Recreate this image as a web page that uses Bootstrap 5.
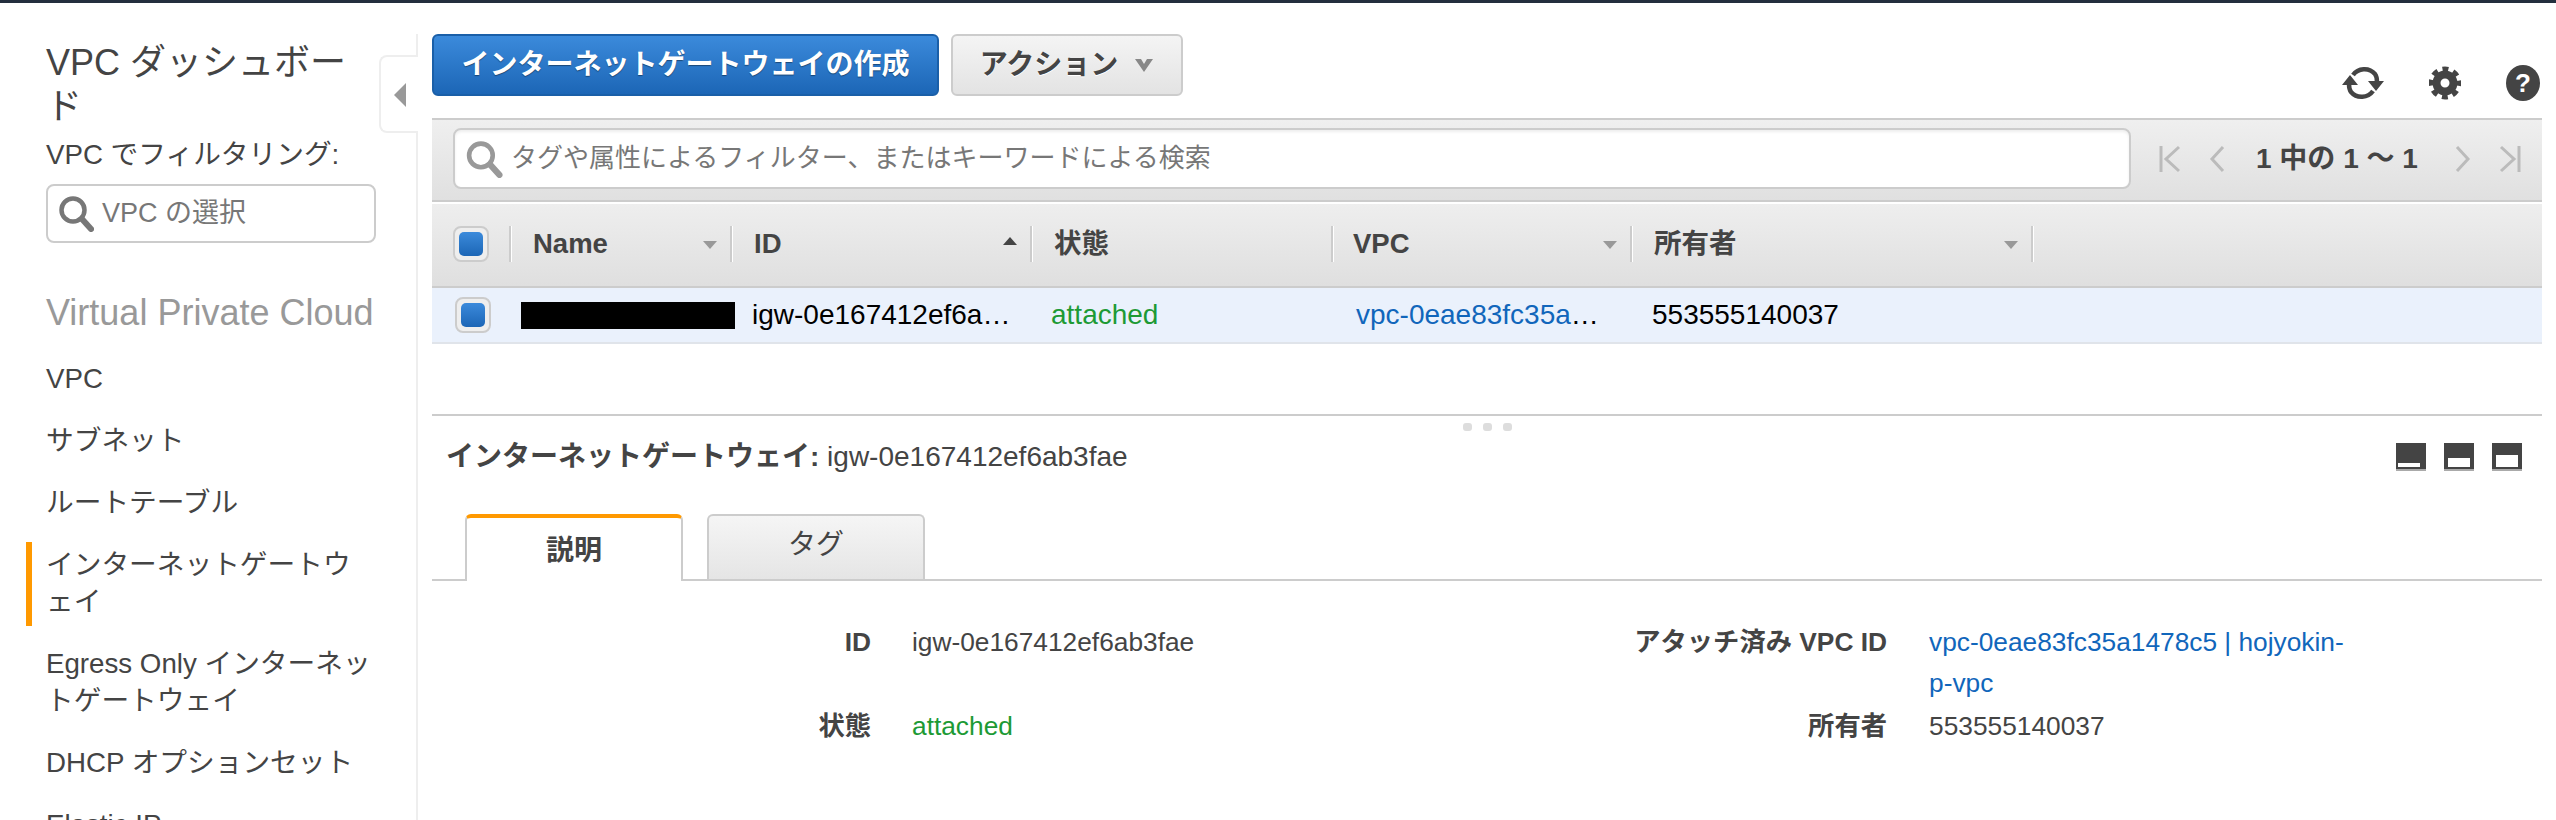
<!DOCTYPE html>
<html lang="ja">
<head>
  <meta charset="UTF-8" />
  <meta name="viewport" content="width=device-width, initial-scale=1.0" />
  <title>インターネットゲートウェイ</title>
  <link href="https://cdn.jsdelivr.net/npm/bootstrap@5.3.0/dist/css/bootstrap.min.css" rel="stylesheet" />
  <style>
    html, body { height: 820px; overflow: hidden; }
    body {
      font-family: "Liberation Sans", "Noto Sans CJK JP", sans-serif;
      font-size: 26px;
      color: #444;
      background: #fff;
    }
    a { text-decoration: none; color: #1166bb; }

    .top-strip { height: 3px; background: #232f3e; }
    .shell { margin-top: 31px; height: 786px; }

    /* sidebar */
    .side-col { width: 418px; flex: none; border-right: 2px solid #eee; padding: 7px 0 0 46px; position: relative; }
    .side-title { font-size: 36px; line-height: 44px; font-weight: 400; margin: 0; color: #444; }
    .side-label { font-size: 27.7px; line-height: 32px; margin-top: 10px; white-space: nowrap; }
    .vpc-select { width: 330px; height: 59px; margin-top: 13px; border: 2px solid #ccc; border-radius: 8px; padding-left: 10px; color: #777; font-size: 27px; }
    .side-head { font-size: 36px; line-height: 44px; color: #999; margin-top: 48px; white-space: nowrap; }
    .side-nav { margin-top: 25px; font-size: 27.7px; }
    .side-nav a { display: block; color: #444; line-height: 37px; position: relative; white-space: nowrap; }
    .side-nav a + a { margin-top: 25px; }
    .side-nav a.on::before { content: ""; position: absolute; left: -20px; top: -4px; width: 6px; height: 84px; background: #f90; }
    .collapse-tab { position: absolute; left: 379px; top: 21px; width: 39px; height: 78px; background: #fff; border: 2px solid #eee; border-right: 0; border-radius: 8px 0 0 8px; }
    .collapse-tab i { position: absolute; left: 13px; top: 26px; border-style: solid; border-width: 12px 12px 12px 0; border-color: transparent #999 transparent transparent; }

    /* main */
    .main-col { flex: 1; margin: 0 14px; min-width: 0; }
    .tool-row { height: 84px; }
    .btn-create, .btn-action { height: 62px; font-size: 28px; font-weight: 700; border-radius: 6px; padding: 0; line-height: 1; }
    .btn-create { width: 507px; color: #fff; background: linear-gradient(#3b8adb, #1c66b6); border: 2px solid #1a5fa8; text-shadow: 0 1px 1px rgba(0,0,0,.4); }
    .btn-action { width: 232px; color: #444; background: linear-gradient(#f4f4f4, #e3e3e3); border: 2px solid #ccc; text-shadow: 0 1px 0 #fff; }
    .tool-icons { gap: 45px; margin: 31px 2px 0 auto; }

    .filter-bar { height: 84px; border-top: 2px solid #ccc; border-bottom: 2px solid #ccc; background: linear-gradient(#efefef, #e0e0e0); padding: 8px 0 0 21px; }
    .filter-box { width: 1678px; height: 61px; background: #fff; border: 2px solid #ccc; border-radius: 8px; padding-left: 10px; color: #777; box-shadow: inset 0 2px 3px #eee; }
    .pager { margin-left: 28px; height: 61px; }
    .pager b { color: #444; font-size: 28px; margin: 0 37px 0 31px; white-space: nowrap; }
    .pager .far-btn { margin-left: 28px; }

    .grid-head { height: 84px; margin-top: 2px; border-bottom: 2px solid #ccc; background: linear-gradient(#eee, #dfdfdf); font-size: 27.5px; font-weight: 700; padding-bottom: 2px; }
    .hcell { height: 36px; border-right: 2px solid #ccc; box-shadow: 1px 0 0 #fff; padding-left: 22px; position: relative; flex: none; }
    .hcell i { position: absolute; right: 13px; top: 15px; border-style: solid; border-width: 8px 7px 0 7px; border-color: #999 transparent transparent transparent; }
    .hcell i.up { border-width: 0 7px 8px 7px; border-color: transparent transparent #444 transparent; top: 11px; }
    .w-check { width: 79px; padding-left: 21px; }
    .w-name { width: 221px; }
    .w-id { width: 300px; }
    .w-state { width: 301px; }
    .w-vpc { width: 299px; padding-left: 20px; }
    .w-owner { width: 401px; }

    .tick-box { width: 36px; height: 36px; border: 2px solid #ccc; border-radius: 8px; background: #eee; padding: 4px; flex: none; }
    .tick-box span { display: block; height: 100%; border-radius: 5px; background: linear-gradient(#3b8adb, #1c66b6); }

    .grid-row { height: 56px; background: #eaf1fc; border-bottom: 2px solid #e0e4ea; font-size: 28px; color: #000; padding-left: 23px; }
    .redact-bar { width: 214px; height: 27px; background: #000; margin: 0 17px 0 30px; flex: none; }
    .cell-id { width: 299px; flex: none; white-space: nowrap; }
    .cell-state { width: 305px; flex: none; color: #1d9a35; }
    .cell-vpc { width: 296px; flex: none; white-space: nowrap; }
    .ok-text { color: #1d9a35; }

    .pane-split { margin-top: 70px; border-top: 2px solid #ccc; height: 24px; gap: 11px; padding-top: 7px; }
    .pane-split i { width: 9px; height: 8px; background: #ddd; border-radius: 3px; }
    .pane-head { height: 38px; padding: 0 20px 0 14px; font-size: 28px; }
    .size-btns { gap: 18px; }
    .tab-row { height: 67px; border-bottom: 2px solid #ccc; padding-left: 33px; gap: 24px; margin-top: 38px; }
    .tab-on, .tab-off { width: 218px; font-size: 28px; text-align: center; }
    .tab-on { height: 67px; border: 2px solid #ccc; border-top: 4px solid #f90; border-bottom: 0; border-radius: 6px 6px 0 0; background: #fff; font-weight: 700; line-height: 66px; }
    .tab-off { height: 65px; border: 2px solid #ccc; border-bottom: 0; border-radius: 6px 6px 0 0; background: linear-gradient(#f5f5f5, #e5e5e5); line-height: 57px; }

    .detail-grid { display: grid; grid-template-columns: 439px 512px 504px 480px; row-gap: 2px; padding-top: 41px; line-height: 41px; font-size: 26.3px; }
    .detail-grid dt { text-align: right; font-weight: 700; margin: 0; }
    .detail-grid dd { margin: 0; }
    .detail-grid dd:nth-of-type(odd) { padding-left: 41px; }
    .detail-grid dd:nth-of-type(even) { padding-left: 42px; }
  </style>
</head>

<body>
  <div class="top-strip"></div>

  <div class="shell d-flex">
    <!-- サイドバー -->
    <div class="side-col">
      <h1 class="side-title">VPC ダッシュボー<br>ド</h1>
      <div class="side-label">VPC でフィルタリング:</div>
      <div class="vpc-select d-flex align-items-center gap-2">
        <svg width="36" height="37" viewBox="0 0 36 37"><circle cx="15" cy="15" r="11.500" fill="#fff" stroke="#777" stroke-width="4.500"/><path d="M24 24l9 10" stroke="#777" stroke-width="6" stroke-linecap="round"/></svg>
        <span>VPC の選択</span>
      </div>
      <div class="side-head">Virtual Private Cloud</div>
      <nav class="side-nav">
        <a href="#">VPC</a>
        <a href="#">サブネット</a>
        <a href="#">ルートテーブル</a>
        <a href="#" class="on">インターネットゲートウ<br>ェイ</a>
        <a href="#">Egress Only インターネッ<br>トゲートウェイ</a>
        <a href="#">DHCP オプションセット</a>
        <a href="#">Elastic IP</a>
      </nav>
      <div class="collapse-tab"><i></i></div>
    </div>

    <!-- メイン -->
    <div class="main-col">
      <div class="tool-row d-flex align-items-start gap-2">
        <button class="btn btn-create">インターネットゲートウェイの作成</button>
        <button class="btn btn-action ms-1 d-flex align-items-center justify-content-center gap-3">
          <span>アクション</span>
          <svg width="20" height="14" viewBox="0 0 20 14"><path d="M1 1h6l3 5 3-5h6l-9 13z" fill="#888"/></svg>
        </button>
        <div class="tool-icons d-flex align-items-center">
          <svg width="42" height="34" viewBox="0 0 42 34" fill="none">
            <path d="M11 9C16 2 27 1 33 8c1.500 2 2 4 2 8" stroke="#444" stroke-width="4.500"/>
            <path d="M31 25C26 32 15 33 9 26c-1.500-2-2-4-2-8" stroke="#444" stroke-width="4.500"/>
            <path d="M26 15h16l-8 10zM0 19h16l-8-10z" fill="#444"/>
          </svg>
          <svg width="32" height="34" viewBox="0 0 32 34">
            <circle cx="16" cy="17" r="8.500" fill="none" stroke="#444" stroke-width="8"/>
            <circle cx="16" cy="17" r="13" fill="none" stroke="#444" stroke-width="7" stroke-dasharray="5.500 4.710" stroke-dashoffset="2.750"/>
          </svg>
          <svg width="34" height="36" viewBox="0 0 34 36">
            <ellipse cx="17" cy="18" rx="17" ry="18" fill="#444"/>
            <text x="17" y="27" text-anchor="middle" fill="#fff" font-family="Liberation Sans" font-weight="700" font-size="26">?</text>
          </svg>
        </div>
      </div>

      <div class="filter-bar d-flex">
        <div class="filter-box d-flex align-items-center gap-2">
          <svg width="38" height="38" viewBox="0 0 36 37"><circle cx="15" cy="15" r="11.500" fill="#fff" stroke="#999" stroke-width="4.500"/><path d="M24 24l9 10" stroke="#999" stroke-width="6" stroke-linecap="round"/></svg>
          <span>タグや属性によるフィルター、またはキーワードによる検索</span>
        </div>
        <div class="pager d-flex align-items-center">
          <svg width="22" height="28" viewBox="0 0 22 28" fill="none" stroke="#bbb" stroke-width="3"><path d="M2 1v26M20 2L7 14l13 12"/></svg>
          <svg class="far-btn" width="16" height="28" viewBox="0 0 16 28" fill="none" stroke="#bbb" stroke-width="3"><path d="M14 2L3 14l11 12"/></svg>
          <b>1 中の 1 〜 1</b>
          <svg width="16" height="28" viewBox="0 0 16 28" fill="none" stroke="#bbb" stroke-width="3"><path d="M2 2l11 12L2 26"/></svg>
          <svg class="far-btn" width="22" height="28" viewBox="0 0 22 28" fill="none" stroke="#bbb" stroke-width="3"><path d="M20 1v26M2 2l13 12L2 26"/></svg>
        </div>
      </div>

      <div class="grid-head d-flex align-items-center">
        <div class="hcell w-check d-flex align-items-center"><div class="tick-box"><span></span></div></div>
        <div class="hcell w-name d-flex align-items-center">Name<i></i></div>
        <div class="hcell w-id d-flex align-items-center">ID<i class="up"></i></div>
        <div class="hcell w-state d-flex align-items-center">状態</div>
        <div class="hcell w-vpc d-flex align-items-center">VPC<i></i></div>
        <div class="hcell w-owner d-flex align-items-center">所有者<i></i></div>
      </div>
      <div class="grid-row d-flex align-items-center">
        <div class="tick-box"><span></span></div>
        <div class="redact-bar"></div>
        <div class="cell-id">igw-0e167412ef6a…</div>
        <div class="cell-state">attached</div>
        <div class="cell-vpc"><a href="#">vpc-0eae83fc35a</a>…</div>
        <div>553555140037</div>
      </div>

      <div class="pane-split d-flex justify-content-center"><i></i><i></i><i></i></div>
      <div class="pane-head d-flex align-items-center">
        <div><b>インターネットゲートウェイ:</b> igw-0e167412ef6ab3fae</div>
        <div class="size-btns d-flex ms-auto">
          <svg width="30" height="28" viewBox="0 0 30 28"><rect width="30" height="28" fill="#444"/><rect y="26" width="30" height="2" fill="#aaa"/><rect x="2" y="20" width="22" height="4" fill="#fff"/></svg>
          <svg width="30" height="28" viewBox="0 0 30 28"><rect width="30" height="28" fill="#444"/><rect y="26" width="30" height="2" fill="#aaa"/><rect x="4" y="15" width="22" height="9" fill="#fff"/></svg>
          <svg width="30" height="28" viewBox="0 0 30 28"><rect width="30" height="28" fill="#444"/><rect y="26" width="30" height="2" fill="#aaa"/><rect x="4" y="12" width="22" height="12" fill="#fff"/></svg>
        </div>
      </div>
      <div class="tab-row d-flex align-items-start">
        <div class="tab-on">説明</div>
        <div class="tab-off">タグ</div>
      </div>

      <dl class="detail-grid">
        <dt>ID</dt>
        <dd>igw-0e167412ef6ab3fae</dd>
        <dt>アタッチ済み VPC ID</dt>
        <dd><a href="#">vpc-0eae83fc35a1478c5 | hojyokin-p-vpc</a></dd>
        <dt>状態</dt>
        <dd class="ok-text">attached</dd>
        <dt>所有者</dt>
        <dd>553555140037</dd>
      </dl>
    </div>
  </div>

  <script src="https://cdn.jsdelivr.net/npm/bootstrap@5.3.0/dist/js/bootstrap.bundle.min.js"></script>
</body>
</html>
